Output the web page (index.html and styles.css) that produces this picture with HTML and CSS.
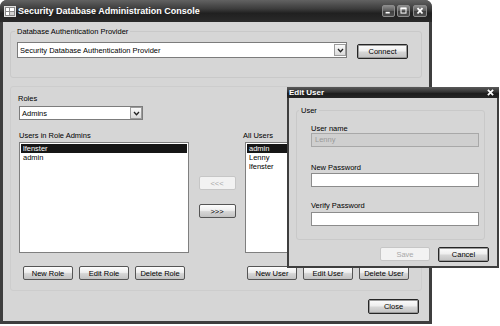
FILE: index.html
```html
<!DOCTYPE html>
<html lang="en">
<head>
	<meta charset="UTF-8">
	<title>Security Database Administration Console</title>
	<link rel="stylesheet" href="styles.css">
</head>
<body>
	<div class="window">
		<div class="titlebar">
			<svg class="app-icon" viewBox="0 0 12 11">
				<rect x="0.5" y="0.5" width="11" height="10" fill="#8a8a8a" stroke="#e0e0e0"/>
				<rect x="2" y="2" width="3" height="3" fill="#fff"/>
				<rect x="6" y="2" width="4" height="3" fill="#fff"/>
				<rect x="2" y="6" width="3" height="3" fill="#fff"/>
				<rect x="6" y="6" width="4" height="3" fill="#d0d0d0"/>
			</svg>
			<span class="title">Security Database Administration Console</span>
			<div class="caption-buttons">
				<span class="cap-btn"><svg viewBox="0 0 13 12"><rect x="3" y="7" width="5" height="2" fill="#fff"/></svg></span>
				<span class="cap-btn"><svg viewBox="0 0 13 12"><rect x="3.5" y="2.5" width="6" height="6" fill="none" stroke="#fff" stroke-width="1.2"/><rect x="3" y="2" width="7" height="2" fill="#fff"/></svg></span>
				<span class="cap-btn close"><svg viewBox="0 0 14 12"><path d="M4 2.5 L10 9 M10 2.5 L4 9" stroke="#fff" stroke-width="2.2"/></svg></span>
			</div>
		</div>
		<div class="client">
			<fieldset class="group provider">
				<legend>Database Authentication Provider</legend>
				<div class="provider-row">
					<div class="combo wide">
						<span class="combo-text">Security Database Authentication Provider</span>
						<span class="drop"><svg viewBox="0 0 8 6"><path d="M1 1.2 L4 4.4 L7 1.2" fill="none" stroke="#222" stroke-width="1.6"/></svg></span>
					</div>
					<button class="btn connect">Connect</button>
				</div>
			</fieldset>

			<div class="group roles">
				<div class="field-label roles-label">Roles</div>
				<div class="combo small">
					<span class="combo-text">Admins</span>
					<span class="drop"><svg viewBox="0 0 8 6"><path d="M1 1.2 L4 4.4 L7 1.2" fill="none" stroke="#222" stroke-width="1.6"/></svg></span>
				</div>
				<div class="lists">
					<div class="list-col">
						<div class="field-label">Users in Role Admins</div>
						<ul class="listbox">
							<li class="selected">lfenster</li>
							<li>admin</li>
						</ul>
						<div class="btn-row">
							<button class="btn">New Role</button>
							<button class="btn">Edit Role</button>
							<button class="btn">Delete Role</button>
						</div>
					</div>
					<div class="move-col">
						<button class="btn move" disabled>&lt;&lt;&lt;</button>
						<button class="btn move">&gt;&gt;&gt;</button>
					</div>
					<div class="list-col right">
						<div class="field-label">All Users</div>
						<ul class="listbox">
							<li class="selected">admin</li>
							<li>Lenny</li>
							<li>lfenster</li>
						</ul>
						<div class="btn-row">
							<button class="btn">New User</button>
							<button class="btn">Edit User</button>
							<button class="btn">Delete User</button>
						</div>
					</div>
				</div>
			</div>

			<div class="footer">
				<button class="btn default">Close</button>
			</div>
		</div>
	</div>

	<div class="dialog">
		<div class="dialog-bar">
			<span class="dialog-title">Edit User</span>
			<svg class="dialog-close" viewBox="0 0 8 8"><path d="M1 1 L7 7 M7 1 L1 7" stroke="#fff" stroke-width="2"/></svg>
		</div>
		<div class="dialog-body">
			<fieldset class="group user">
				<legend>User</legend>
				<div class="field-label first">User name</div>
				<div class="textbox disabled">Lenny</div>
				<div class="field-label gap">New Password</div>
				<div class="textbox"></div>
				<div class="field-label gap2">Verify Password</div>
				<div class="textbox last"></div>
			</fieldset>
			<div class="dialog-buttons">
				<button class="btn" disabled>Save</button>
				<button class="btn default">Cancel</button>
			</div>
		</div>
	</div>
</body>
</html>
```

FILE: styles.css
```css
* {
	box-sizing: border-box;
}

body {
	margin: 0;
	width: 500px;
	height: 326px;
	overflow: hidden;
	position: relative;
	background-color: #fff;
	font-family: "Liberation Sans", Arial, sans-serif;
	font-size: 7.5px;
	line-height: 9px;
	color: #000;
}

/* main window */
.window {
	width: 432px;
	height: 324px;
	display: flex;
	flex-direction: column;
	padding: 0 3px 3px;
	background-color: #3e3e3e;
	border-radius: 7px 7px 0 0;
}

.titlebar {
	height: 22px;
	margin: 0 -3px;
	padding: 0 5px 0 4px;
	display: flex;
	align-items: center;
	color: #fff;
	border-radius: 7px 7px 0 0;
	background: linear-gradient(#626262, #3c3c3c 40%, #202020 60%, #2a2a2a);
}

.app-icon {
	width: 12px;
	height: 11px;
	margin-right: 2px;
}

.title {
	flex: 1;
	font-weight: bold;
	font-size: 9px;
}

.caption-buttons {
	display: flex;
	gap: 2px;
}

.cap-btn {
	width: 13px;
	height: 12px;
	border: 1px solid #8c8c8c;
	border-radius: 2px;
	background: linear-gradient(#8a8a8a, #5a5a5a 50%, #3e3e3e 50%, #505050);
	display: flex;
}

.cap-btn.close {
	width: 14px;
	margin-left: 1px;
}

.cap-btn svg {
	width: 100%;
	height: 100%;
}

.client {
	flex: 1;
	display: flex;
	flex-direction: column;
	background-color: #d6d6d6;
}

/* group boxes */
.group {
	border: 1px solid #c9c9c9;
	border-radius: 3px;
	margin: 0 7px;
	min-width: 0;
}

legend {
	padding: 0 2px;
	margin-left: -2px;
}

.provider {
	margin-top: 5px;
	padding: 6px 6px 18px;
}

.provider-row {
	display: flex;
	align-items: flex-start;
	gap: 10px;
}

.combo {
	display: flex;
	align-items: center;
	padding-left: 2px;
	background-color: #fff;
	border: 1px solid #7c7c7c;
}

.combo.wide {
	width: 330px;
	height: 16px;
}

.combo.small {
	width: 124px;
	height: 14px;
	margin-top: 3px;
}

.combo-text {
	flex: 1;
}

.drop {
	width: 12px;
	height: 12px;
	display: flex;
	align-items: center;
	justify-content: center;
	border: 1px solid #9c9c9c;
	background: linear-gradient(#fafafa, #dadada);
}

.drop svg {
	width: 7px;
	height: 5px;
}

.roles {
	margin-top: 8px;
	padding: 7px 8px 10px;
	border-color: #cdcdcd;
}

.roles-label {
	margin-left: -1px;
}

.field-label {
	height: 9px;
}

.lists {
	display: grid;
	grid-template-columns: 170px 56px 170px;
	margin-top: 11px;
}

.listbox {
	margin: 2px 0 0;
	padding: 1px;
	height: 111px;
	list-style: none;
	background-color: #fff;
	border: 1px solid #7f7f7f;
}

.listbox li {
	height: 9px;
	padding-left: 2px;
}

.listbox li.selected {
	background-color: #161616;
	color: #fff;
}

.btn-row {
	display: flex;
	gap: 6px;
	margin-top: 13px;
	padding-left: 4px;
}

.right .btn-row {
	padding-left: 2px;
}

.right .field-label {
	margin-left: -2px;
}

.move-col {
	display: flex;
	flex-direction: column;
	align-items: center;
	gap: 14px;
	padding-top: 45px;
}

/* buttons */
.btn {
	width: 50px;
	height: 14px;
	padding: 0;
	font-family: inherit;
	font-size: 7.5px;
	line-height: 9px;
	color: #000;
	border: 1px solid #555;
	border-radius: 2px;
	background: linear-gradient(#fdfdfd, #eeeeee 45%, #d6d6d6 55%, #c2c2c2);
}

.btn.move {
	width: 37px;
}

.btn.connect,
.btn.default {
	width: 51px;
	height: 15px;
	border-color: #262626;
	box-shadow: inset 0 0 0 1px #9a9a9a;
}

.btn.connect {
	margin-top: 2px;
}

.btn:disabled {
	color: #a8a8a8;
	border-color: #c6c6c6;
	background: #f2f2f2;
}

.footer {
	display: flex;
	justify-content: flex-end;
	margin-top: 8px;
	padding-right: 10px;
}

/* edit user dialog, floats over the console */
.dialog {
	position: absolute;
	left: 287px;
	top: 87px;
	width: 212px;
	height: 181px;
	display: flex;
	flex-direction: column;
	padding: 0 2px 2px;
	background-color: #3e3e3e;
}

.dialog-bar {
	height: 11px;
	margin: 0 -2px;
	padding: 0 5px 0 2px;
	display: flex;
	align-items: center;
	color: #fff;
	background: linear-gradient(#5a5a5a, #333 45%, #1c1c1c 60%, #262626);
}

.dialog-title {
	flex: 1;
	font-weight: bold;
	font-size: 8px;
}

.dialog-close {
	width: 7px;
	height: 7px;
}

.dialog-body {
	flex: 1;
	display: flex;
	flex-direction: column;
	background-color: #d6d6d6;
}

.user {
	margin: 8px 12px 0 7px;
	padding: 0 4px 13px;
}

.user .field-label,
.user .textbox {
	margin-left: 10px;
}

.user .field-label.first {
	margin-top: 9px;
}

.user .field-label.gap {
	margin-top: 16px;
}

.user .field-label.gap2 {
	margin-top: 14px;
}

.textbox {
	width: 168px;
	height: 14px;
	margin-top: 1px;
	padding-left: 3px;
	line-height: 12px;
	background-color: #fff;
	border: 1px solid #8c8c8c;
}

.textbox.disabled {
	margin-top: 0;
	color: #9a9a9a;
	background-color: #cfcfcf;
	border-color: #a8a8a8;
}

.textbox.last {
	margin-top: 2px;
}

.dialog-buttons {
	display: flex;
	justify-content: flex-end;
	gap: 8px;
	margin-top: 7px;
	padding-right: 8px;
}
```
